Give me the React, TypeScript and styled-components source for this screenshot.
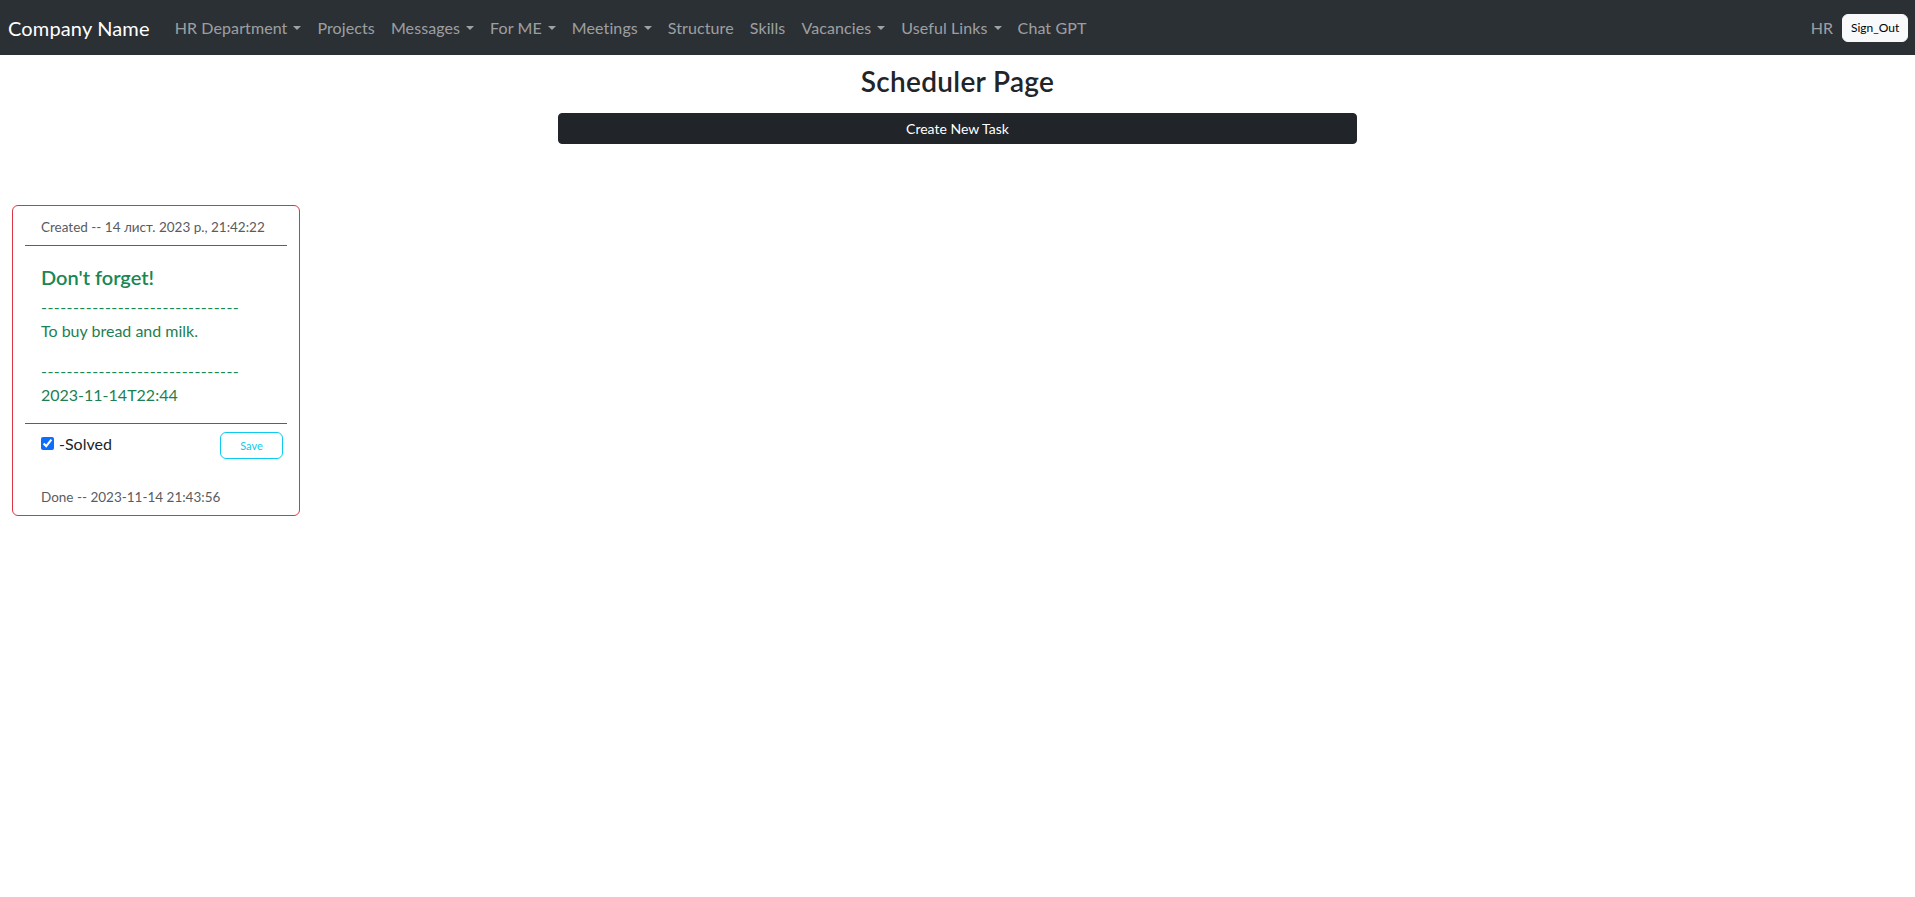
import React from "react";
import styled, { createGlobalStyle } from "styled-components";

const GlobalStyle = createGlobalStyle`
  html, body { margin: 0; padding: 0; background: #fff; }
  body {
    font-family: Lato, "Open Sans", "Liberation Sans", sans-serif;
    font-size: 16px;
    line-height: 1.5;
    color: #212529;
  }
  * { box-sizing: border-box; }
`;

const NavBar = styled.nav`
  height: 55px;
  background: #2b3035;
  display: flex;
  align-items: center;
  padding: 0 7px 0 8px;
`;

const Brand = styled.a`
  font-size: 20px;
  color: #fff;
  line-height: 30px;
  margin-right: 17px;
  letter-spacing: 0.15px;
  white-space: nowrap;
`;

const NavList = styled.ul`
  display: flex;
  align-items: center;
  list-style: none;
  margin: 0;
  padding: 0;
  flex: 1;
`;

const NavLink = styled.li<{ $drop?: boolean }>`
  padding: 8px;
  color: rgba(255, 255, 255, 0.55);
  line-height: 24px;
  letter-spacing: 0.1px;
  white-space: nowrap;
  display: flex;
  align-items: center;
  &::after {
    content: "";
    display: ${(p) => (p.$drop ? "inline-block" : "none")};
    margin-left: 6px;
    border-top: 4.8px solid rgba(255, 255, 255, 0.55);
    border-left: 4.8px solid transparent;
    border-right: 4.8px solid transparent;
  }
`;

const UserBox = styled.div`
  display: flex;
  align-items: center;
  gap: 9px;
`;

const UserName = styled.span`
  color: rgba(255, 255, 255, 0.55);
  line-height: 24px;
`;

const SignOut = styled.button`
  font-family: inherit;
  font-size: 12px;
  font-weight: 400;
  line-height: 18px;
  padding: 4px 8px;
  background: #f8f9fa;
  color: #000;
  border: 1px solid #f8f9fa;
  border-radius: 6px;
  width: 66px;
`;

const Main = styled.main`
  display: flex;
  flex-direction: column;
  align-items: center;
`;

const Title = styled.h3`
  margin: 10px 0 0;
  font-size: 28px;
  font-weight: 600;
  line-height: 1.2;
  letter-spacing: 0.3px;
  color: #212529;
`;

const CreateButton = styled.button`
  margin-top: 14px;
  width: 799px;
  height: 31px;
  background: #212529;
  color: #fff;
  border: 1px solid #212529;
  border-radius: 4px;
  font-family: inherit;
  font-size: 14px;
  line-height: 21px;
`;

const CardArea = styled.section`
  padding: 61px 12px 0;
  display: flex;
`;

const Card = styled.article`
  width: 288px;
  border: 1px solid #dc3545;
  border-radius: 6px;
  background: #fff;
`;

const CardHeader = styled.header`
  margin: 0 12px;
  padding: 11px 16px 8px;
  border-bottom: 1px solid #198754;
  font-size: 13.5px;
  line-height: 20px;
  color: #595c5f;
  white-space: nowrap;
`;

const CardBody = styled.div`
  margin: 0 12px;
  padding: 19px 16px 16px;
  color: #198754;
`;

const TaskTitle = styled.h5`
  margin: 0 0 6px;
  font-size: 20px;
  font-weight: 600;
  line-height: 24px;
  color: #198754;
`;

const TextBlock = styled.p<{ $last?: boolean }>`
  margin: 0 0 ${(p) => (p.$last ? 0 : 16)}px;
  line-height: 24px;
  color: #1d7f52;
`;

const Dashes = styled.span`
  letter-spacing: 0.45px;
  color: #198754;
`;

const CardFooter = styled.footer`
  margin: 0 12px;
  padding: 8px 4px 8px 16px;
  border-top: 1px solid #198754;
`;

const FooterRow = styled.div`
  display: flex;
  justify-content: space-between;
  align-items: flex-start;
`;

const CheckLabel = styled.label`
  display: flex;
  align-items: center;
  line-height: 24px;
  color: #212529;
  input {
    margin: 0 5px 0 0;
    width: 13px;
    height: 13px;
    accent-color: #0d6efd;
  }
`;

const SaveButton = styled.button`
  width: 63px;
  height: 27px;
  font-family: inherit;
  font-size: 11px;
  background: #fff;
  color: #0dcaf0;
  border: 1px solid #0dcaf0;
  border-radius: 6px;
  padding: 0;
`;

const DoneText = styled.div`
  margin-top: 28px;
  font-size: 13.5px;
  line-height: 20px;
  color: #595c5f;
`;

const navItems: { label: string; drop?: boolean }[] = [
  { label: "HR Department", drop: true },
  { label: "Projects" },
  { label: "Messages", drop: true },
  { label: "For ME", drop: true },
  { label: "Meetings", drop: true },
  { label: "Structure" },
  { label: "Skills" },
  { label: "Vacancies", drop: true },
  { label: "Useful Links", drop: true },
  { label: "Chat GPT" },
];

const DASHES = "-------------------------------";

export default function App() {
  return (
    <>
      <GlobalStyle />
      <NavBar>
        <Brand>Company Name</Brand>
        <NavList>
          {navItems.map((n) => (
            <NavLink key={n.label} $drop={n.drop}>
              {n.label}
            </NavLink>
          ))}
        </NavList>
        <UserBox>
          <UserName>HR</UserName>
          <SignOut>Sign_Out</SignOut>
        </UserBox>
      </NavBar>
      <Main>
        <Title>Scheduler Page</Title>
        <CreateButton>Create New Task</CreateButton>
      </Main>
      <CardArea>
        <Card>
          <CardHeader>Created -- 14 лист. 2023 р., 21:42:22</CardHeader>
          <CardBody>
            <TaskTitle>Don't forget!</TaskTitle>
            <TextBlock>
              <Dashes>{DASHES}</Dashes>
              <br />
              To buy bread and milk.
            </TextBlock>
            <TextBlock $last>
              <Dashes>{DASHES}</Dashes>
              <br />
              2023-11-14T22:44
            </TextBlock>
          </CardBody>
          <CardFooter>
            <FooterRow>
              <CheckLabel>
                <input type="checkbox" defaultChecked />
                -Solved
              </CheckLabel>
              <SaveButton>Save</SaveButton>
            </FooterRow>
            <DoneText>Done -- 2023-11-14 21:43:56</DoneText>
          </CardFooter>
        </Card>
      </CardArea>
    </>
  );
}
